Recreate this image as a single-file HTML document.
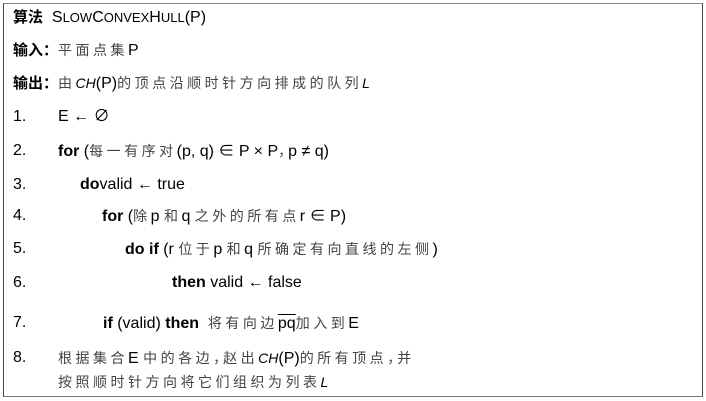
<!DOCTYPE html>
<html><head><meta charset="utf-8"><style>
body{margin:0;width:706px;height:401px;background:#fff;position:relative;overflow:hidden;font-family:"Liberation Sans","Noto Sans CJK SC",sans-serif;font-size:16px;color:#000}
.box{position:absolute;left:3px;top:3px;width:698px;height:392px;border:1.5px solid #444;border-top-color:#888;border-bottom-color:#777}
.l{position:absolute;white-space:nowrap;line-height:18px}
.c{font-family:"Noto Sans CJK SC",sans-serif;font-size:14px;color:#444;letter-spacing:3.5px}
.h{font-family:"Noto Sans CJK SC",sans-serif;font-weight:bold;font-size:15px}
b{font-weight:bold}
i{font-family:"Liberation Sans",sans-serif;font-size:14px}
.sc{font-size:13px}
.cm{font-family:"Noto Sans CJK SC",sans-serif;font-size:14px;color:#444;margin-right:-4px}
</style></head><body>
<div class="box"></div>
<div class="l" style="left:13px;top:8px"><span class="h">算法</span>&nbsp; S<span class="sc">LOW</span>C<span class="sc">ONVEX</span>H<span class="sc">ULL</span>(P)</div>
<div class="l" style="left:13px;top:41px"><span class="h">输入：</span><span class="c">平面点集</span>P</div>
<div class="l" style="left:13px;top:74px"><span class="h">输出：</span><span class="c">由</span><i>CH</i>(P)<span class="c">的顶点沿顺时针方向排成的队列</span><i>L</i></div>
<div class="l" style="left:13px;top:108px">1.</div><div class="l" style="left:58px;top:108px">E ← ∅</div>
<div class="l" style="left:13px;top:142px">2.</div><div class="l" style="left:58px;top:142px"><b>for</b> (<span class="c">每一有序对</span>(p, q) ∈ P × P<span class="cm">，</span>p ≠ q)</div>
<div class="l" style="left:13px;top:176px">3.</div><div class="l" style="left:80px;top:176px"><b>do</b>valid ← true</div>
<div class="l" style="left:13px;top:207px">4.</div><div class="l" style="left:102px;top:207px"><b>for</b> (<span class="c">除</span>p <span class="c">和</span>q <span class="c">之外的所有点</span>r ∈ P)</div>
<div class="l" style="left:13px;top:240px">5.</div><div class="l" style="left:125px;top:240px"><b>do if</b> (r <span class="c">位于</span>p <span class="c">和</span>q <span class="c">所确定有向直线的左侧</span>)</div>
<div class="l" style="left:13px;top:274px">6.</div><div class="l" style="left:172px;top:274px"><b>then</b> valid ← false</div>
<div class="l" style="left:13px;top:314px">7.</div><div class="l" style="left:103px;top:314px"><b>if</b> (valid) <b>then</b>&nbsp; <span class="c">将有向边</span><span style="text-decoration:overline">pq</span><span class="c">加入到</span>E</div>
<div class="l" style="left:13px;top:349px">8.</div><div class="l" style="left:58px;top:349px"><span class="c">根据集合</span>E <span class="c">中的各边</span><span class="cm">，</span><span class="c">赵出</span><i>CH</i>(P)<span class="c">的所有顶点</span><span class="cm">，</span><span class="c">并</span></div>
<div class="l" style="left:58px;top:373px"><span class="c">按照顺时针方向将它们组织为列表</span><i>L</i></div>
</body></html>
